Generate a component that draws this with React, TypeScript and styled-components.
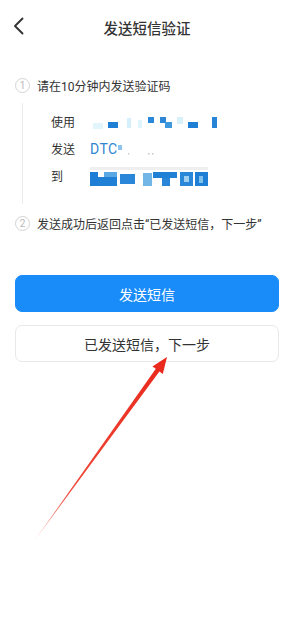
import React from 'react';
import styled, { createGlobalStyle } from 'styled-components';

const GlobalStyle = createGlobalStyle`
  html, body {
    margin: 0;
    padding: 0;
    background: #ffffff;
  }
  body {
    font-family: Roboto, "Noto Sans CJK SC", sans-serif;
    color: #323233;
  }
`;

const Page = styled.div`
  position: relative;
  width: 294px;
  min-height: 622px;
  background: #ffffff;
  overflow: hidden;
`;

const NavBar = styled.div`
  display: grid;
  grid-template-columns: 50px 1fr 50px;
  align-items: center;
  height: 54px;
`;

const BackButton = styled.div`
  display: flex;
  align-items: center;
  padding-left: 13px;
  margin-top: -3px;
`;

const Title = styled.div`
  text-align: center;
  font-size: 14.5px;
  font-weight: 500;
  color: #333333;
`;

const Steps = styled.div`
  padding: 24px 15px 0;
`;

const StepRow = styled.div`
  display: flex;
  align-items: center;
  gap: 7px;
  height: 15px;
`;

const StepIndex = styled.span`
  box-sizing: border-box;
  width: 15px;
  height: 15px;
  border: 1px solid #d4d4d4;
  border-radius: 50%;
  display: flex;
  align-items: center;
  justify-content: center;
  font-size: 10px;
  color: #b8b8b8;
  font-family: Roboto, sans-serif;
  line-height: 1;
`;

const StepText = styled.span`
  font-size: 12px;
  color: #333333;
  white-space: nowrap;
`;

const Detail = styled.div`
  margin: 10px 0 12px 7px;
  padding: 5px 0 15px 28px;
  border-left: 1px solid #ececec;
`;

const DetailRow = styled.div`
  display: flex;
  align-items: center;
  height: 27px;
`;

const Label = styled.span`
  width: 39px;
  font-size: 12px;
  color: #333333;
`;

const Value = styled.div`
  display: flex;
  align-items: center;
  height: 27px;
`;

const Sender = styled.span`
  font-size: 14px;
  color: #2e86d0;
  font-family: Roboto, sans-serif;
  letter-spacing: 0.4px;
`;

const Actions = styled.div`
  display: flex;
  flex-direction: column;
  gap: 13px;
  padding: 44px 15px 0 15px;
`;

const Button = styled.button<{ $primary?: boolean }>`
  box-sizing: border-box;
  width: 264px;
  height: 37px;
  border-radius: 7px;
  font-family: Roboto, "Noto Sans CJK SC", sans-serif;
  font-size: 14px;
  cursor: pointer;
  border: 1px solid ${(p) => (p.$primary ? '#1a8cfa' : '#e8e8e8')};
  background: ${(p) => (p.$primary ? '#1a8cfa' : '#ffffff')};
  color: ${(p) => (p.$primary ? '#ffffff' : '#333333')};
`;

const Annotation = styled.svg`
  position: absolute;
  left: 0;
  top: 0;
  pointer-events: none;
`;

type Block = [number, number, number, number, string];

const row1: Block[] = [
  [3, 15, 10, 6, '#e2f5fc'],
  [18, 14, 10, 6, '#1f7fd4'],
  [37, 10, 4, 10, '#d3f0fb'],
  [48, 12, 4, 8, '#e0f5fc'],
  [58, 9, 6, 6, '#2a88d8'],
  [70, 9, 6, 6, '#2d86d6'],
  [75, 14, 7, 6, '#3f97dc'],
  [87, 9, 6, 7, '#d8f2fb'],
  [98, 14, 10, 6, '#1f7fd4'],
  [122, 9, 5, 11, '#2884d6'],
];

const row3: Block[] = [
  [0, 5, 118, 3, '#efefef'],
  [0, 10, 8, 14, '#1e7ed6'],
  [8, 15, 19, 9, '#1f80d6'],
  [14, 10, 13, 5, '#5aa8e4'],
  [30, 12, 15, 10, '#2a86d8'],
  [53, 11, 9, 13, '#72b6e8'],
  [63, 10, 24, 6, '#1f80d6'],
  [72, 16, 8, 8, '#2a86d8'],
  [90, 10, 13, 14, '#2b87d8'],
  [94, 14, 5, 6, '#9fd0f0'],
  [105, 10, 13, 14, '#1f7fd4'],
  [109, 14, 4, 7, '#7fc0ec'],
];

const Mosaic = ({ blocks, width }: { blocks: Block[]; width: number }) => (
  <svg width={width} height={27} viewBox={`0 0 ${width} 27`} style={{ display: 'block' }}>
    {blocks.map(([x, y, w, h, c], i) => (
      <rect key={i} x={x} y={y} width={w} height={h} fill={c} />
    ))}
  </svg>
);

export default function App() {
  return (
    <Page>
      <GlobalStyle />
      <NavBar>
        <BackButton>
          <svg width="11" height="18" viewBox="0 0 11 18">
            <path d="M9.5 1.5 L2 9 L9.5 16.5" fill="none" stroke="#333" strokeWidth="1.9" strokeLinecap="round" strokeLinejoin="round" />
          </svg>
        </BackButton>
        <Title>发送短信验证</Title>
        <span />
      </NavBar>

      <Steps>
        <StepRow>
          <StepIndex>1</StepIndex>
          <StepText>请在10分钟内发送验证码</StepText>
        </StepRow>
        <Detail>
          <DetailRow>
            <Label>使用</Label>
            <Mosaic blocks={row1} width={130} />
          </DetailRow>
          <DetailRow>
            <Label>发送</Label>
            <Value>
              <Sender>DTC</Sender>
              <svg width="40" height="27" viewBox="0 0 40 27">
                <rect x="1" y="10" width="4" height="5" fill="#8cc4ee" />
                <rect x="11" y="18" width="1.5" height="1.5" fill="#d0d0d0" />
                <rect x="31" y="18" width="1.5" height="1.5" fill="#c8c8c8" />
                <rect x="35" y="18" width="1.5" height="1.5" fill="#c8c8c8" />
              </svg>
            </Value>
          </DetailRow>
          <DetailRow>
            <Label>到</Label>
            <Mosaic blocks={row3} width={120} />
          </DetailRow>
        </Detail>
        <StepRow>
          <StepIndex>2</StepIndex>
          <StepText>发送成功后返回点击“已发送短信，下一步”</StepText>
        </StepRow>
      </Steps>

      <Actions>
        <Button $primary>发送短信</Button>
        <Button>已发送短信，下一步</Button>
      </Actions>

      <Annotation width="294" height="622" viewBox="0 0 294 622">
        <defs>
          <linearGradient id="arrowFade" x1="35" y1="540" x2="167" y2="357" gradientUnits="userSpaceOnUse">
            <stop offset="0" stopColor="#f4a9a0" />
            <stop offset="0.25" stopColor="#ee4a3a" />
            <stop offset="1" stopColor="#e9281b" />
          </linearGradient>
        </defs>
        <polygon
          points="167,357 162.8,374 159.4,371.4 35,540 155.8,368.7 152.4,366.4"
          fill="url(#arrowFade)"
        />
      </Annotation>
    </Page>
  );
}
